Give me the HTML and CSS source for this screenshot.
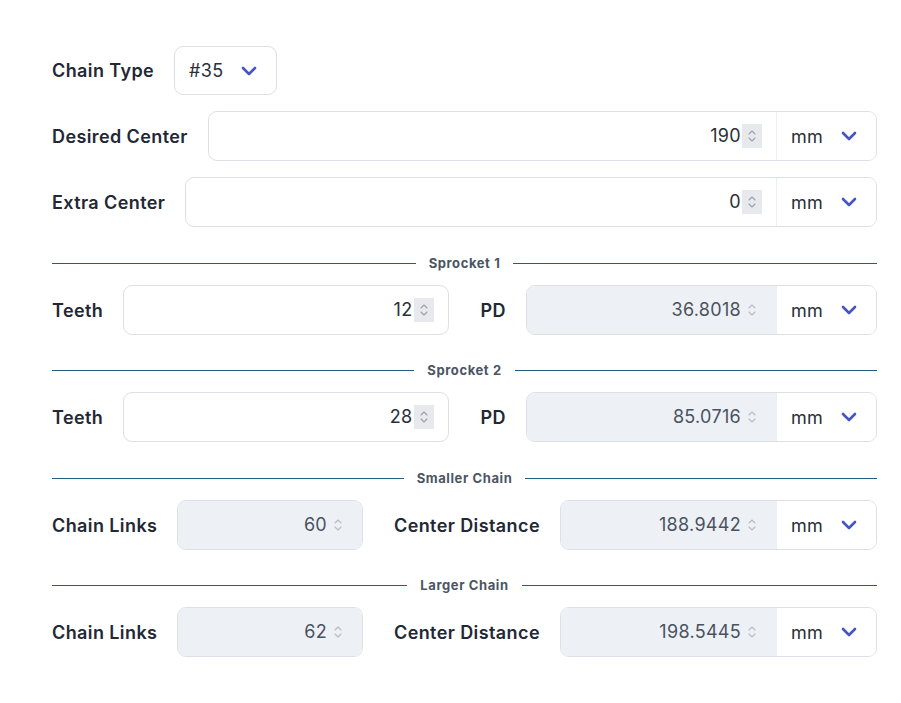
FILE: index.html
```html
<!DOCTYPE html>
<html>
<head>
<meta charset="utf-8">
<link rel="stylesheet" href="styles.css">
</head>
<body>
<div class="form">
  <div class="row">
    <span class="label">Chain Type</span>
    <div class="select">
      <span>#35</span>
      <svg class="chev" viewBox="0 0 16 10" width="16" height="10"><path d="M2 2 L8 8 L14 2" fill="none" stroke="currentColor" stroke-width="2.6" stroke-linecap="round" stroke-linejoin="round"/></svg>
    </div>
  </div>

  <div class="row">
    <span class="label">Desired Center</span>
    <div class="field grow">
      <div class="num"><span class="val">190</span><span class="spin box"><svg viewBox="0 0 10 16" width="10" height="16"><path d="M2 6 L5 3 L8 6 M2 10 L5 13 L8 10" fill="none" stroke="currentColor" stroke-width="1.1" stroke-linecap="round" stroke-linejoin="round"/></svg></span></div>
      <div class="unit"><span>mm</span><svg class="chev" viewBox="0 0 16 10" width="16" height="10"><path d="M2 2 L8 8 L14 2" fill="none" stroke="currentColor" stroke-width="2.6" stroke-linecap="round" stroke-linejoin="round"/></svg></div>
    </div>
  </div>

  <div class="row">
    <span class="label">Extra Center</span>
    <div class="field grow">
      <div class="num"><span class="val">0</span><span class="spin box"><svg viewBox="0 0 10 16" width="10" height="16"><path d="M2 6 L5 3 L8 6 M2 10 L5 13 L8 10" fill="none" stroke="currentColor" stroke-width="1.1" stroke-linecap="round" stroke-linejoin="round"/></svg></span></div>
      <div class="unit"><span>mm</span><svg class="chev" viewBox="0 0 16 10" width="16" height="10"><path d="M2 2 L8 8 L14 2" fill="none" stroke="currentColor" stroke-width="2.6" stroke-linecap="round" stroke-linejoin="round"/></svg></div>
    </div>
  </div>

  <div class="divider wide"><span>Sprocket 1</span></div>

  <div class="row split-even">
    <div class="half">
      <span class="label">Teeth</span>
      <div class="field grow">
        <div class="num"><span class="val">12</span><span class="spin box"><svg viewBox="0 0 10 16" width="10" height="16"><path d="M2 6 L5 3 L8 6 M2 10 L5 13 L8 10" fill="none" stroke="currentColor" stroke-width="1.1" stroke-linecap="round" stroke-linejoin="round"/></svg></span></div>
      </div>
    </div>
    <div class="half">
      <span class="label">PD</span>
      <div class="field grow">
        <div class="num ro"><span class="val">36.8018</span><span class="spin"><svg viewBox="0 0 10 16" width="10" height="16"><path d="M2 6 L5 3 L8 6 M2 10 L5 13 L8 10" fill="none" stroke="currentColor" stroke-width="1.1" stroke-linecap="round" stroke-linejoin="round"/></svg></span></div>
        <div class="unit"><span>mm</span><svg class="chev" viewBox="0 0 16 10" width="16" height="10"><path d="M2 2 L8 8 L14 2" fill="none" stroke="currentColor" stroke-width="2.6" stroke-linecap="round" stroke-linejoin="round"/></svg></div>
      </div>
    </div>
  </div>

  <div class="divider"><span>Sprocket 2</span></div>

  <div class="row split-even">
    <div class="half">
      <span class="label">Teeth</span>
      <div class="field grow">
        <div class="num"><span class="val">28</span><span class="spin box"><svg viewBox="0 0 10 16" width="10" height="16"><path d="M2 6 L5 3 L8 6 M2 10 L5 13 L8 10" fill="none" stroke="currentColor" stroke-width="1.1" stroke-linecap="round" stroke-linejoin="round"/></svg></span></div>
      </div>
    </div>
    <div class="half">
      <span class="label">PD</span>
      <div class="field grow">
        <div class="num ro"><span class="val">85.0716</span><span class="spin"><svg viewBox="0 0 10 16" width="10" height="16"><path d="M2 6 L5 3 L8 6 M2 10 L5 13 L8 10" fill="none" stroke="currentColor" stroke-width="1.1" stroke-linecap="round" stroke-linejoin="round"/></svg></span></div>
        <div class="unit"><span>mm</span><svg class="chev" viewBox="0 0 16 10" width="16" height="10"><path d="M2 2 L8 8 L14 2" fill="none" stroke="currentColor" stroke-width="2.6" stroke-linecap="round" stroke-linejoin="round"/></svg></div>
      </div>
    </div>
  </div>

  <div class="divider wide"><span>Smaller Chain</span></div>

  <div class="row split-chain">
    <div class="half">
      <span class="label">Chain Links</span>
      <div class="field grow">
        <div class="num ro"><span class="val">60</span><span class="spin"><svg viewBox="0 0 10 16" width="10" height="16"><path d="M2 6 L5 3 L8 6 M2 10 L5 13 L8 10" fill="none" stroke="currentColor" stroke-width="1.1" stroke-linecap="round" stroke-linejoin="round"/></svg></span></div>
      </div>
    </div>
    <div class="half">
      <span class="label">Center Distance</span>
      <div class="field grow">
        <div class="num ro"><span class="val">188.9442</span><span class="spin"><svg viewBox="0 0 10 16" width="10" height="16"><path d="M2 6 L5 3 L8 6 M2 10 L5 13 L8 10" fill="none" stroke="currentColor" stroke-width="1.1" stroke-linecap="round" stroke-linejoin="round"/></svg></span></div>
        <div class="unit"><span>mm</span><svg class="chev" viewBox="0 0 16 10" width="16" height="10"><path d="M2 2 L8 8 L14 2" fill="none" stroke="currentColor" stroke-width="2.6" stroke-linecap="round" stroke-linejoin="round"/></svg></div>
      </div>
    </div>
  </div>

  <div class="divider"><span>Larger Chain</span></div>

  <div class="row split-chain">
    <div class="half">
      <span class="label">Chain Links</span>
      <div class="field grow">
        <div class="num ro"><span class="val">62</span><span class="spin"><svg viewBox="0 0 10 16" width="10" height="16"><path d="M2 6 L5 3 L8 6 M2 10 L5 13 L8 10" fill="none" stroke="currentColor" stroke-width="1.1" stroke-linecap="round" stroke-linejoin="round"/></svg></span></div>
      </div>
    </div>
    <div class="half">
      <span class="label">Center Distance</span>
      <div class="field grow">
        <div class="num ro"><span class="val">198.5445</span><span class="spin"><svg viewBox="0 0 10 16" width="10" height="16"><path d="M2 6 L5 3 L8 6 M2 10 L5 13 L8 10" fill="none" stroke="currentColor" stroke-width="1.1" stroke-linecap="round" stroke-linejoin="round"/></svg></span></div>
        <div class="unit"><span>mm</span><svg class="chev" viewBox="0 0 16 10" width="16" height="10"><path d="M2 2 L8 8 L14 2" fill="none" stroke="currentColor" stroke-width="2.6" stroke-linecap="round" stroke-linejoin="round"/></svg></div>
      </div>
    </div>
  </div>
</div>
</body>
</html>
```
FILE: styles.css
```css
* { box-sizing: border-box; }
html, body { margin: 0; padding: 0; background: #fff; }
body {
  font-family: Inter, "Noto Sans", "Liberation Sans", sans-serif;
  color: #1f2937;
}
.form {
  width: 825px;
  margin-left: 52px;
  padding-top: 46px;
  display: flex;
  flex-direction: column;
  gap: 16px;
}
.row {
  display: flex;
  align-items: center;
  gap: 20px;
  height: 50px;
}
.row:first-child { height: 49px; }
.split-even {
  display: grid;
  grid-template-columns: 1fr 1fr;
  gap: 32px;
}
.split-chain {
  display: grid;
  grid-template-columns: 311px 1fr;
  gap: 31px;
}
.half {
  display: flex;
  align-items: center;
  gap: 20px;
  height: 50px;
}
.label {
  font-size: 18px;
  font-weight: 600;
  letter-spacing: 0.4px;
  color: #222834;
  white-space: nowrap;
}
.select {
  height: 49px;
  width: 103px;
  border: 1px solid #dcdfe4;
  border-radius: 9px;
  display: flex;
  align-items: center;
  justify-content: space-between;
  padding: 0 19px 0 14px;
  font-size: 18px;
  letter-spacing: 0.3px;
  color: #2a2f38;
}
.chev { color: #4655c4; display: block; }
.field {
  height: 50px;
  border: 1px solid #dcdfe4;
  border-radius: 9px;
  display: flex;
  overflow: hidden;
  background: #fff;
}
.grow { flex: 1; min-width: 0; }
.num {
  flex: 1;
  display: flex;
  align-items: center;
  justify-content: flex-end;
  padding-right: 14px;
  font-size: 18px;
  letter-spacing: 0.3px;
  color: #2a2f38;
}
.num.ro { background: #edf1f5; color: #4a5160; }
.val { line-height: 1; }
.spin {
  width: 20px;
  height: 24px;
  display: flex;
  align-items: center;
  justify-content: center;
  color: #b7bcc4;
  margin-left: 1px;
}
.spin.box { background: #e8e9ec; color: #9aa0a8; }
.unit {
  width: 100px;
  flex: none;
  border-left: 1px solid #eceef1;
  display: flex;
  align-items: center;
  justify-content: space-between;
  padding: 0 19px 0 14px;
  font-size: 18px;
  letter-spacing: 0.3px;
  color: #2a2f38;
  background: #fff;
}
.divider {
  display: flex;
  align-items: center;
  gap: 13px;
  height: 13px;
  line-height: 13px;
  margin: 13px 0 -1px;
  font-size: 13px;
  font-weight: 700;
  color: #4b5563;
  letter-spacing: 0.6px;
}
.divider.wide { margin-top: 14px; }
.divider::before, .divider::after {
  content: "";
  flex: 1;
  height: 0;
  border-top: 1px solid #1f5f86;
}
```
